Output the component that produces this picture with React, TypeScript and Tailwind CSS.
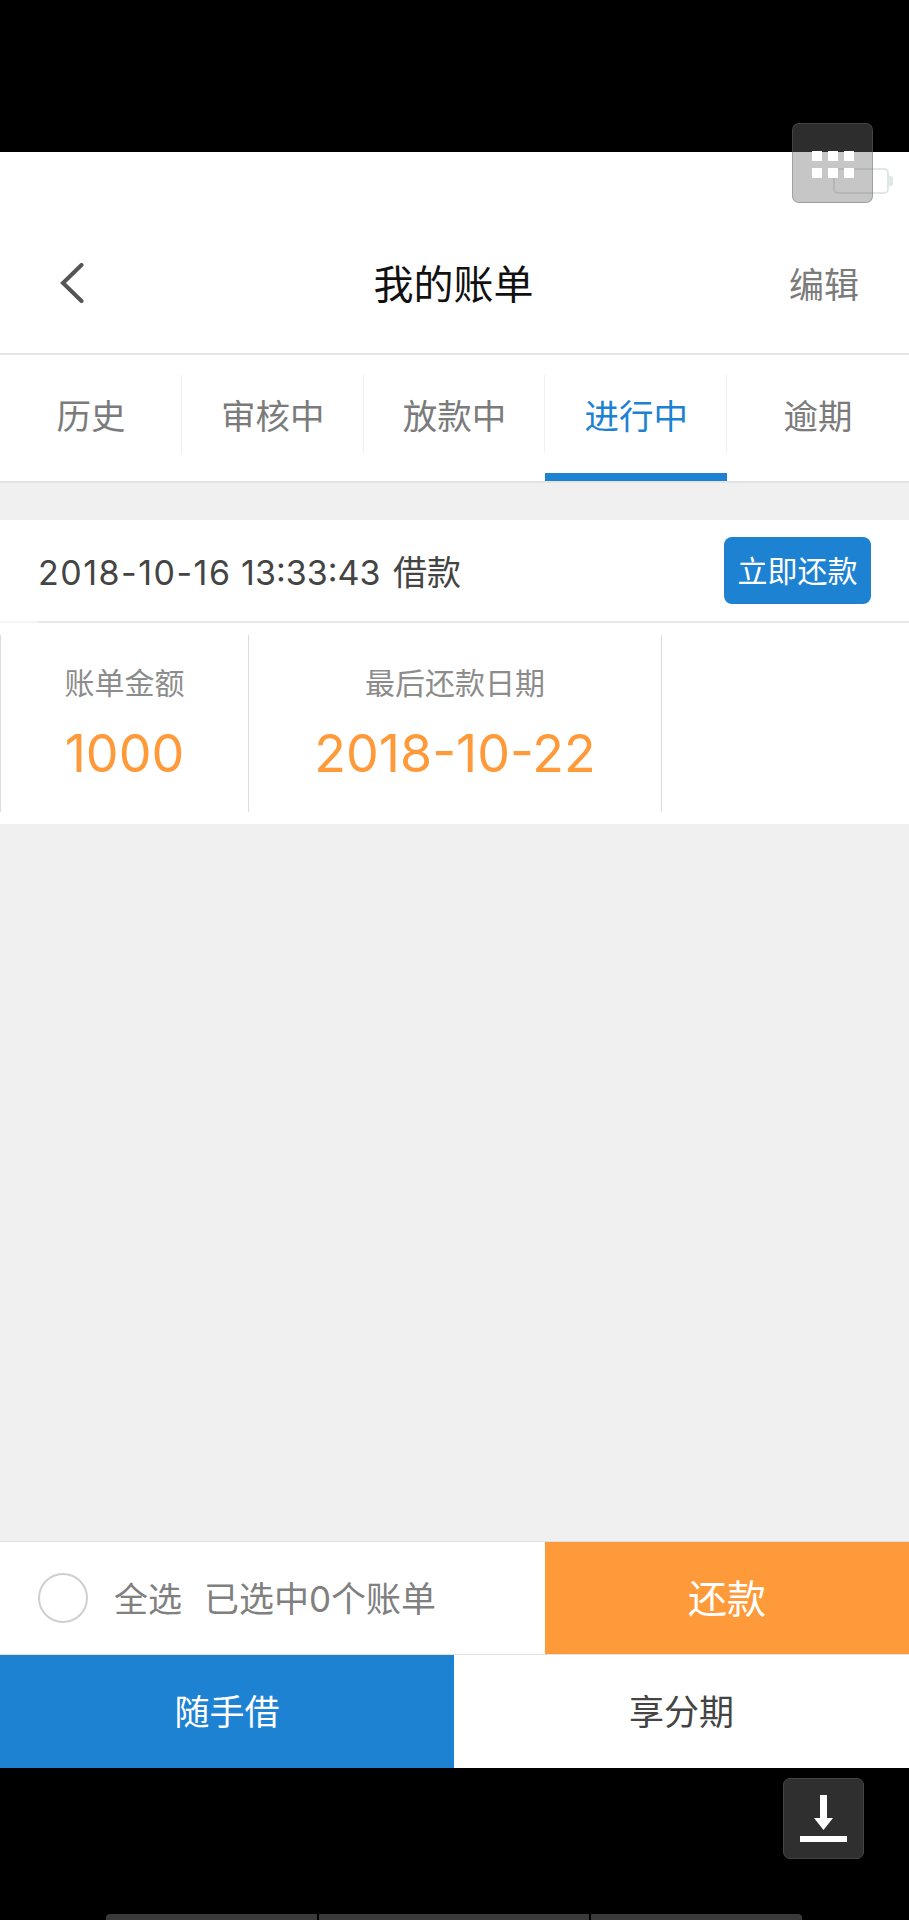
const font = "font-['Inter','Noto_Sans_CJK_SC',sans-serif]";

const tabs = ["历史", "审核中", "放款中", "进行中", "逾期"];

function Tab({ label, active, last }: { label: string; active: boolean; last: boolean }) {
  return (
    <div className="relative flex h-full flex-1 items-center justify-center">
      <span className={`pb-[2px] text-[34.5px] leading-none ${active ? "text-[#1e82d2]" : "text-[#7b7b7b]"}`}>{label}</span>
      {!last && <div className="absolute right-0 top-[20px] h-[78px] w-px bg-[#f0f0f0]" />}
      {active && <div className="absolute bottom-0 left-0 h-[8px] w-full bg-[#1e82d2]" />}
    </div>
  );
}

export default function App() {
  return (
    <div className={`relative flex h-[1920px] w-[909px] flex-col overflow-hidden bg-black ${font}`}>
      <div className="h-[152px] shrink-0" />

      <header className="flex h-[203px] shrink-0 items-end border-b-2 border-[#e4e4e4] bg-white">
        <div className="flex h-[97px] w-full items-start justify-between pl-[58px] pr-[50px]">
          <div className="w-[60px]">
            <svg width="28" height="40" viewBox="0 0 28 40" fill="none" className="mt-[7px]">
              <path d="M23.5 2 L5 20 L23.5 38" stroke="#555" strokeWidth="4" strokeLinecap="round" />
            </svg>
          </div>
          <span className="mt-[9px] text-[40px] leading-none text-[#111]">我的账单</span>
          <span className="mt-[12px] w-[70px] text-[35px] leading-none whitespace-nowrap text-[#7b7b7b]">编辑</span>
        </div>
      </header>

      <nav className="flex h-[128px] shrink-0 border-b-2 border-[#e4e4e4] bg-white">
        {tabs.map((t, i) => (
          <Tab key={t} label={t} active={t === "进行中"} last={i === tabs.length - 1} />
        ))}
      </nav>

      <main className="flex flex-1 flex-col bg-[#f0f0f0] pt-[37px]">
        <div className="flex h-[101px] items-center justify-between bg-white pl-[38px] pr-[38px]">
          <span className="pt-[4px] text-[34px] leading-none text-[#444]">
            <span className="tracking-[1.5px]">2018-10-16</span> 13:33:43 <span className="ml-[3px]">借款</span>
          </span>
          <button className="flex h-[67px] w-[147px] items-center justify-center rounded-[8px] bg-[#1e82d2] text-[30px] leading-none text-white">
            立即还款
          </button>
        </div>
        <div className="h-[2px] bg-[#f4f4f4]">
          <div className="ml-[38px] h-full bg-[#e8e8e8]" />
        </div>
        <div className="flex h-[201px] items-center bg-white">
          <div className="flex h-[177px] w-[249px] flex-col items-center border-x border-[#dcdcdc] pt-[33px]">
            <span className="text-[30px] leading-none text-[#8c8c8c]">账单金额</span>
            <span className="mt-[30px] text-[52px] leading-none text-[#ff9a3a]">1000</span>
          </div>
          <div className="flex h-[177px] w-[413px] flex-col items-center border-r border-[#dcdcdc] pt-[33px]">
            <span className="text-[30px] leading-none text-[#8c8c8c]">最后还款日期</span>
            <span className="mt-[30px] text-[52px] leading-none text-[#ff9a3a]">2018-10-22</span>
          </div>
        </div>
      </main>

      <div className="flex h-[114px] shrink-0 border-y border-[#e0e0e0] bg-white">
        <div className="flex w-[545px] items-center pl-[38px]">
          <div className="size-[50px] rounded-full border-2 border-[#cfcfcf]" />
          <span className="ml-[26px] pt-[3px] text-[34px] leading-none text-[#808080]">全选</span>
          <span className="ml-[22px] pt-[3px] text-[35px] leading-none text-[#808080]">已选中0个账单</span>
        </div>
        <button className="flex-1 bg-[#ff9a3a] text-[39px] leading-none text-white">还款</button>
      </div>

      <div className="flex h-[113px] shrink-0">
        <button className="w-[454px] bg-[#1e82d2] pt-[2px] text-[35px] leading-none text-white">随手借</button>
        <button className="flex-1 bg-white pt-[2px] text-[35px] leading-none text-[#444]">享分期</button>
      </div>

      <div className="h-[152px] shrink-0" />

      {/* ghost battery under the floating button */}
      <div className="absolute left-[833px] top-[168px] h-[26px] w-[56px] rounded-[5px] border-2 border-[#dfe8e6]" />
      <div className="absolute left-[889px] top-[176px] h-[10px] w-[4px] rounded-r-[2px] bg-[#dfe8e6]" />

      {/* floating menu button */}
      <div className="absolute left-[792px] top-[123px] grid h-[80px] w-[81px] place-items-center rounded-[7px] border border-[#666]/40 bg-[#707070]/40 pt-[3px]">
        <div className="grid grid-cols-3 gap-x-[6px] gap-y-[7px]">
          {Array.from({ length: 6 }).map((_, i) => (
            <div key={i} className="size-[10px] bg-white" />
          ))}
        </div>
      </div>

      {/* download button */}
      <div className="absolute left-[783px] top-[1778px] flex h-[81px] w-[81px] flex-col items-center rounded-[7px] border border-[#444] bg-[#2f2f2f] pt-[16px]">
        <svg width="47" height="47" viewBox="0 0 47 47" fill="none">
          <rect x="20" y="0" width="7" height="24" fill="#fff" />
          <path d="M14 23 H33 L23.5 35 Z" fill="#fff" />
          <rect y="41" width="47" height="6" fill="#fff" />
        </svg>
      </div>

      {/* nav bar remnants */}
      <div className="absolute left-[106px] top-[1914px] flex h-[6px] w-[696px] gap-[2px]">
        <div className="w-[211px] rounded-tl-[4px] bg-[#3a3a3a]" />
        <div className="w-[270px] bg-[#3a3a3a]" />
        <div className="flex-1 rounded-tr-[4px] bg-[#3a3a3a]" />
      </div>
    </div>
  );
}
